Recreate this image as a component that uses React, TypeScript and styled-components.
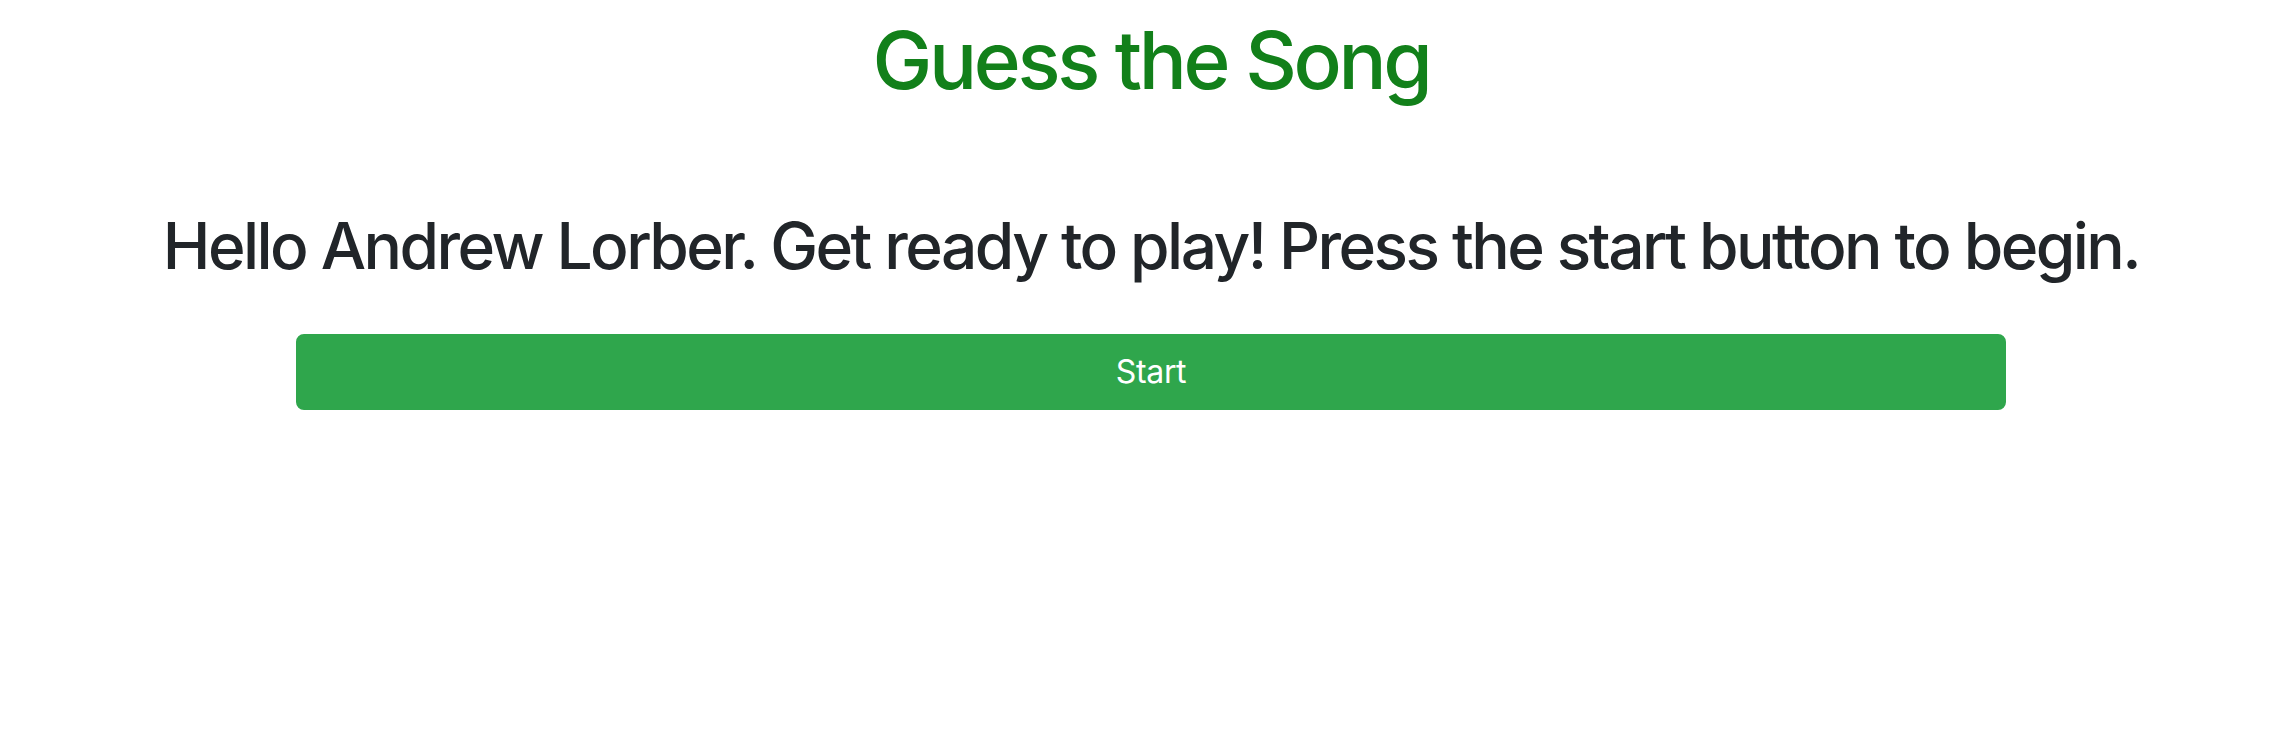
import React from "react";
import styled, { createGlobalStyle } from "styled-components";

const GlobalStyle = createGlobalStyle`
  html, body {
    margin: 0;
    padding: 0;
    background: #ffffff;
  }
  body {
    font-family: Inter, "Liberation Sans", Arial, sans-serif;
    color: #212529;
  }
`;

const Page = styled.main`
  display: flex;
  flex-direction: column;
  align-items: center;
  padding: 0 0 0 22px;
`;

const Title = styled.h1`
  margin: 12px 0 0;
  font-size: 80px;
  line-height: 1.2;
  font-weight: 500;
  letter-spacing: -0.042em;
  color: #12801a;
  text-align: center;
`;

const Greeting = styled.h2`
  margin: 100px 0 0;
  font-size: 64px;
  line-height: 1.2;
  font-weight: 500;
  letter-spacing: -0.04em;
  color: #212529;
  text-align: center;
`;

const StartButton = styled.button`
  margin-top: 49px;
  width: 1710px;
  height: 76px;
  padding: 12px 24px;
  border: 2px solid #2fa64c;
  border-radius: 8px;
  background: #2fa64c;
  color: #ffffff;
  font-family: Inter, "Liberation Sans", Arial, sans-serif;
  font-size: 32px;
  line-height: 1.5;
  font-weight: 400;
  letter-spacing: -0.01em;
  cursor: pointer;
`;

export default function App() {
  return (
    <>
      <GlobalStyle />
      <Page>
        <Title>Guess the Song</Title>
        <Greeting>
          Hello Andrew Lorber. Get ready to play! Press the start button to begin.
        </Greeting>
        <StartButton type="button">Start</StartButton>
      </Page>
    </>
  );
}
